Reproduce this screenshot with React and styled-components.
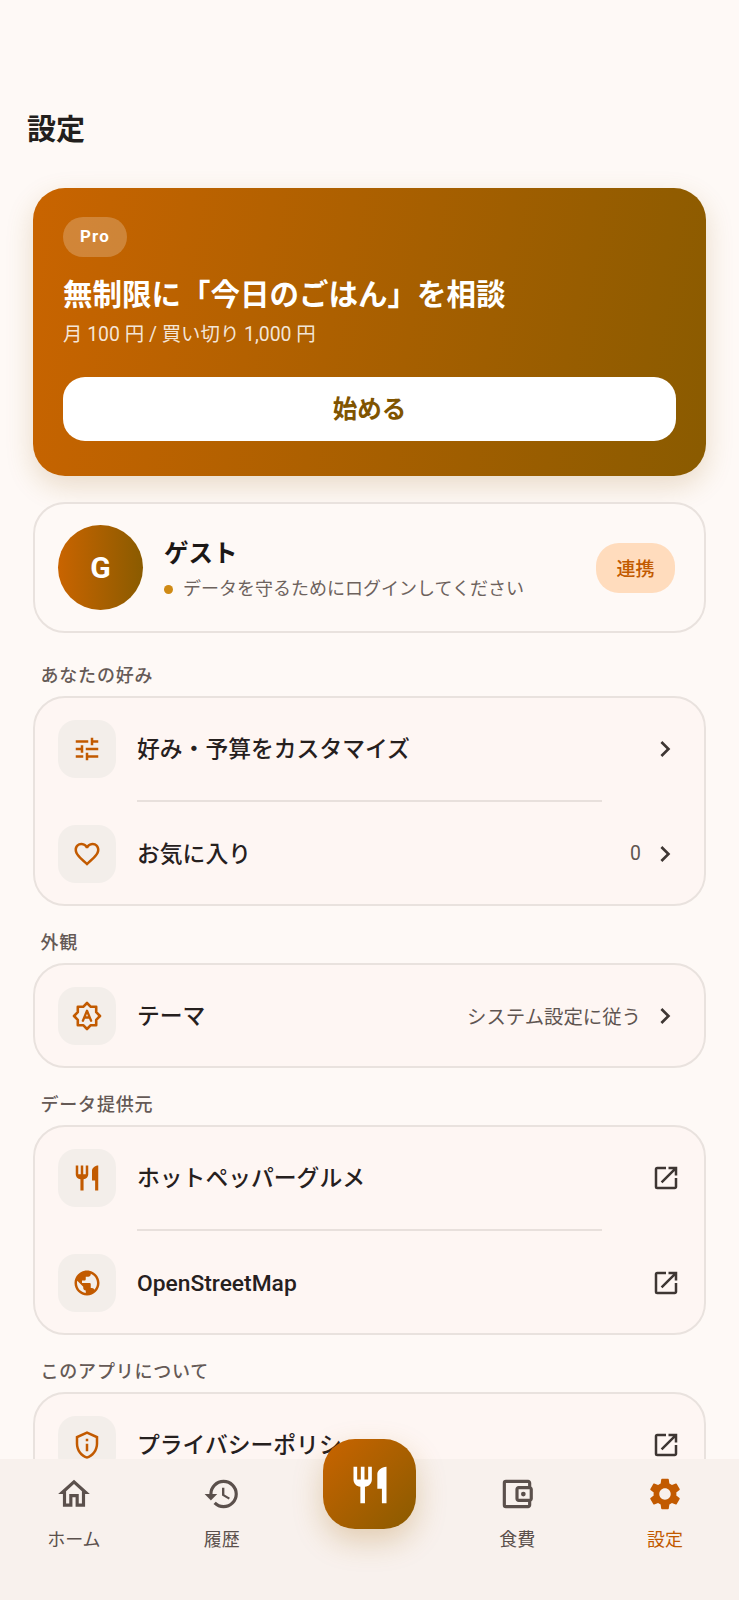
import React from 'react';
import styled, { createGlobalStyle } from 'styled-components';
import {
  MdChevronRight,
  MdFavoriteBorder,
  MdHistory,
  MdOpenInNew,
  MdOutlineAccountBalanceWallet,
  MdOutlineHome,
  MdOutlinePrivacyTip,
  MdPublic,
  MdRestaurant,
  MdSettings,
  MdTune,
} from 'react-icons/md';

const accent = '#c25a00';
const gradient = 'linear-gradient(100deg, #c96400 0%, #8a5b00 100%)';

const GlobalStyle = createGlobalStyle`
  html, body {
    margin: 0;
    padding: 0;
    background: #fef9f6;
  }
  body {
    font-family: Roboto, "Noto Sans CJK JP", sans-serif;
    color: #1f1a18;
  }
`;

const Screen = styled.div`
  position: relative;
  display: flex;
  flex-direction: column;
  width: 739px;
  height: 1600px;
  overflow: hidden;
  background: #fef9f6;
`;

const Scroll = styled.main`
  flex: 1;
  min-height: 0;
  overflow: hidden;
  padding: 112px 33px 0;
`;

const PageTitle = styled.h1`
  margin: 0 0 39px -6px;
  font-size: 29px;
  line-height: 37px;
  font-weight: 700;
  color: #231f1d;
`;

const ProCard = styled.section`
  display: flex;
  flex-direction: column;
  align-items: flex-start;
  height: 288px;
  box-sizing: border-box;
  padding: 29px 30px 0;
  border-radius: 32px;
  background: ${gradient};
  box-shadow: 0 10px 28px rgba(150, 100, 20, 0.2);
  color: #fff;
`;

const ProBadge = styled.span`
  display: flex;
  align-items: center;
  justify-content: center;
  width: 64px;
  height: 40px;
  padding-bottom: 2px;
  box-sizing: border-box;
  border-radius: 20px;
  background: rgba(255, 255, 255, 0.22);
  font-size: 17px;
  font-weight: 700;
  letter-spacing: 1.2px;
`;

const ProTitle = styled.h2`
  margin: 18px 0 0;
  font-size: 29.5px;
  line-height: 40px;
  font-weight: 700;
  white-space: nowrap;
`;

const ProPrice = styled.p`
  margin: 7px 0 0;
  font-size: 19.4px;
  line-height: 26px;
  color: rgba(255, 255, 255, 0.85);
`;

const ProButton = styled.button`
  width: 100%;
  height: 64px;
  margin-top: 29px;
  padding: 0 0 3px;
  border: 0;
  border-radius: 22px;
  background: #fff;
  color: #805400;
  font-family: inherit;
  font-size: 24.5px;
  font-weight: 700;
`;

const Card = styled.section`
  box-sizing: border-box;
  border: 2px solid #e9e2de;
  border-radius: 32px;
  background: #fef6f3;
`;

const GuestCard = styled(Card)`
  display: flex;
  align-items: center;
  height: 131px;
  margin-top: 26px;
  padding: 0 29px 0 23px;
  background: #fef9f6;
`;

const Avatar = styled.div`
  display: flex;
  align-items: center;
  justify-content: center;
  flex: none;
  width: 85px;
  height: 85px;
  border-radius: 50%;
  background: linear-gradient(90deg, #c96400 0%, #8a5b00 100%);
  color: #fff;
  font-size: 30px;
  font-weight: 700;
`;

const GuestInfo = styled.div`
  flex: 1;
  margin-left: 21px;
  padding-top: 4px;
`;

const GuestName = styled.div`
  font-size: 24.5px;
  line-height: 34px;
  font-weight: 700;
  color: #1c1816;
`;

const GuestNote = styled.div`
  display: flex;
  align-items: center;
  gap: 10px;
  margin-top: 5px;
  font-size: 18px;
  line-height: 26px;
  color: #6d625d;
`;

const Dot = styled.span`
  width: 9px;
  height: 9px;
  border-radius: 50%;
  background: #cf8a14;
`;

const LinkButton = styled.button`
  flex: none;
  width: 79px;
  height: 50px;
  border: 0;
  border-radius: 23px;
  background: #ffdcbd;
  color: ${accent};
  font-family: inherit;
  font-size: 19px;
  font-weight: 500;
`;

const SectionLabel = styled.h3`
  margin: ${({ $first }) => ($first ? '31px' : '25px')} 0 8px 7.5px;
  font-size: 18px;
  line-height: 24px;
  font-weight: 500;
  letter-spacing: 0.8px;
  color: #655a56;
`;

const Row = styled.div`
  display: flex;
  align-items: center;
  height: 101px;
  box-sizing: border-box;
  padding: 0 23px;
`;

const Divider = styled.hr`
  height: 2px;
  margin: 1px 102px;
  border: 0;
  background: #e8e0dc;
`;

const IconBox = styled.div`
  display: flex;
  align-items: center;
  justify-content: center;
  flex: none;
  width: 58px;
  height: 58px;
  border-radius: 18px;
  background: #f3eeea;
  color: ${accent};
  font-size: 30px;
`;

const RowTitle = styled.span`
  flex: 1;
  margin-left: 21px;
  padding-top: 3px;
  font-size: 22.8px;
  line-height: 32px;
  font-weight: 500;
  color: #26201e;
`;

const RowValue = styled.span`
  margin-right: 8px;
  font-size: 19.4px;
  font-weight: 400;
  color: #5f5551;
`;

const Trailing = styled.span`
  display: flex;
  flex: none;
  color: #3e3633;
  font-size: ${({ $size }) => $size}px;
`;

const BottomNav = styled.nav`
  position: relative;
  display: grid;
  grid-template-columns: repeat(5, 1fr);
  flex: none;
  height: 141px;
  background: #f8f1ed;
`;

const NavItem = styled.div`
  display: flex;
  flex-direction: column;
  align-items: center;
  padding-top: 16px;
  color: ${({ $active }) => ($active ? accent : '#5b504c')};
`;

const NavIcon = styled.span`
  display: flex;
  font-size: 38px;
`;

const NavLabel = styled.span`
  margin-top: 14px;
  font-size: 18px;
  line-height: 26px;
  font-weight: 400;
`;

const Fab = styled.button`
  position: absolute;
  left: 323px;
  top: -20px;
  display: flex;
  align-items: center;
  justify-content: center;
  width: 93px;
  height: 90px;
  padding: 2px 0 0;
  border: 0;
  border-radius: 32px;
  background: linear-gradient(135deg, #c96400 0%, #8a5b00 100%);
  color: #fff;
  font-size: 44px;
  box-shadow: 0 12px 30px rgba(170, 110, 20, 0.28);
`;

// two overlaid squares with an A, no matching icon in the outlined set
const AutoStar = () => (
  <svg width="30" height="30" viewBox="0 0 30 30" fill="none" stroke="currentColor" strokeWidth="2.6" strokeLinejoin="round">
    <path d="M15 2l3.800 3.800h5.400v5.400L28 15l-3.800 3.800v5.400h-5.400L15 28l-3.800-3.800H5.800v-5.400L2 15l3.800-3.800V5.800h5.400z" />
    <path d="M10.900 19.800 15 9.800l4.100 10M12.300 16.500h5.400" strokeLinecap="round" strokeWidth="2.300" />
  </svg>
);

const Chevron = () => (
  <Trailing $size={32}>
    <MdChevronRight />
  </Trailing>
);

const External = () => (
  <Trailing $size={30}>
    <MdOpenInNew />
  </Trailing>
);

const navItems = [
  { label: 'ホーム', icon: <MdOutlineHome /> },
  { label: '履歴', icon: <MdHistory /> },
  null,
  { label: '食費', icon: <MdOutlineAccountBalanceWallet /> },
  { label: '設定', icon: <MdSettings />, active: true },
];

const App = () => (
  <Screen>
    <GlobalStyle />
    <Scroll>
      <PageTitle>設定</PageTitle>

      <ProCard>
        <ProBadge>Pro</ProBadge>
        <ProTitle>無制限に「今日のごはん」を相談</ProTitle>
        <ProPrice>月 100 円 / 買い切り 1,000 円</ProPrice>
        <ProButton>始める</ProButton>
      </ProCard>

      <GuestCard>
        <Avatar>G</Avatar>
        <GuestInfo>
          <GuestName>ゲスト</GuestName>
          <GuestNote>
            <Dot />
            データを守るためにログインしてください
          </GuestNote>
        </GuestInfo>
        <LinkButton>連携</LinkButton>
      </GuestCard>

      <SectionLabel $first>あなたの好み</SectionLabel>
      <Card>
        <Row>
          <IconBox><MdTune /></IconBox>
          <RowTitle>好み・予算をカスタマイズ</RowTitle>
          <Chevron />
        </Row>
        <Divider />
        <Row>
          <IconBox><MdFavoriteBorder /></IconBox>
          <RowTitle>お気に入り</RowTitle>
          <RowValue>0</RowValue>
          <Chevron />
        </Row>
      </Card>

      <SectionLabel>外観</SectionLabel>
      <Card>
        <Row>
          <IconBox><AutoStar /></IconBox>
          <RowTitle>テーマ</RowTitle>
          <RowValue>システム設定に従う</RowValue>
          <Chevron />
        </Row>
      </Card>

      <SectionLabel>データ提供元</SectionLabel>
      <Card>
        <Row>
          <IconBox><MdRestaurant /></IconBox>
          <RowTitle>ホットペッパーグルメ</RowTitle>
          <External />
        </Row>
        <Divider />
        <Row>
          <IconBox><MdPublic /></IconBox>
          <RowTitle>OpenStreetMap</RowTitle>
          <External />
        </Row>
      </Card>

      <SectionLabel>このアプリについて</SectionLabel>
      <Card>
        <Row>
          <IconBox><MdOutlinePrivacyTip /></IconBox>
          <RowTitle>プライバシーポリシー</RowTitle>
          <External />
        </Row>
      </Card>
    </Scroll>

    <BottomNav>
      {navItems.map((item, i) =>
        item ? (
          <NavItem key={item.label} $active={item.active}>
            <NavIcon>{item.icon}</NavIcon>
            <NavLabel>{item.label}</NavLabel>
          </NavItem>
        ) : (
          <div key={i} />
        )
      )}
      <Fab><MdRestaurant /></Fab>
    </BottomNav>
  </Screen>
);

export default App;
